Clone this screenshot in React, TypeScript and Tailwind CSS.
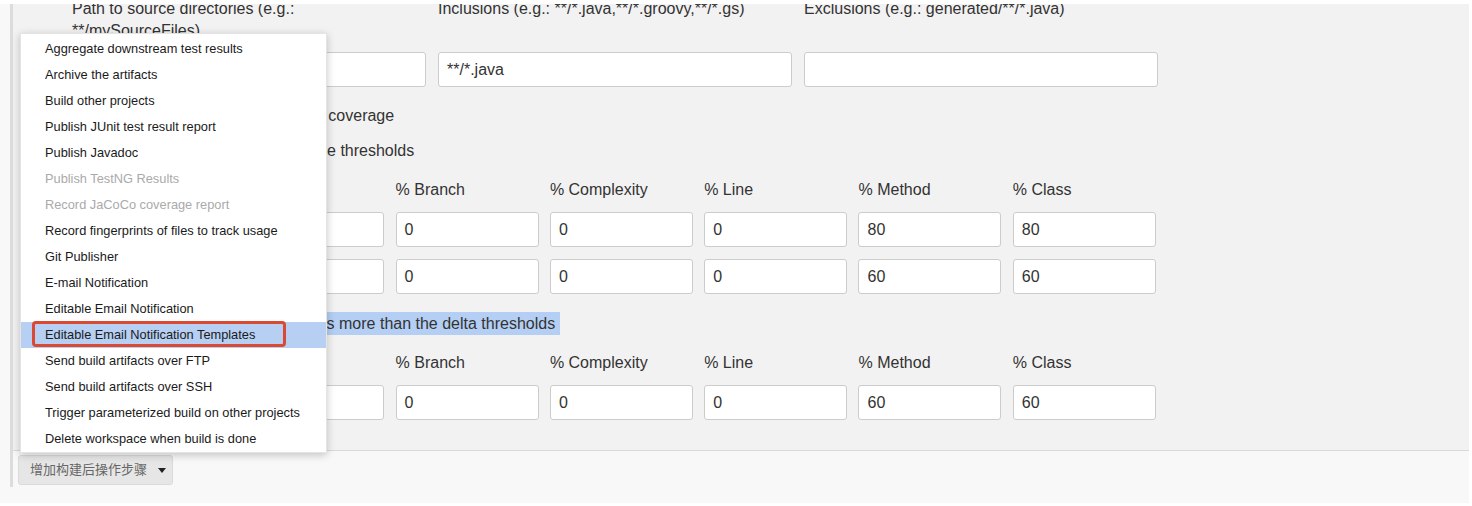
import React from "react";

const items: { label: string; disabled?: boolean; active?: boolean }[] = [
  { label: "Aggregate downstream test results" },
  { label: "Archive the artifacts" },
  { label: "Build other projects" },
  { label: "Publish JUnit test result report" },
  { label: "Publish Javadoc" },
  { label: "Publish TestNG Results", disabled: true },
  { label: "Record JaCoCo coverage report", disabled: true },
  { label: "Record fingerprints of files to track usage" },
  { label: "Git Publisher" },
  { label: "E-mail Notification" },
  { label: "Editable Email Notification" },
  { label: "Editable Email Notification Templates", active: true },
  { label: "Send build artifacts over FTP" },
  { label: "Send build artifacts over SSH" },
  { label: "Trigger parameterized build on other projects" },
  { label: "Delete workspace when build is done" },
];

const cols = ["", "% Branch", "% Complexity", "% Line", "% Method", "% Class"];

function Field({ value = "" }: { value?: string }) {
  return (
    <div className="h-[35px] bg-white border border-[#cccccc] rounded-[3px] pl-[8px] flex items-center text-[16px] text-[#333]">
      {value}
    </div>
  );
}

function Check() {
  return <span className="inline-block w-[13px] h-[13px] bg-white border border-[#999] rounded-[2px] shrink-0" />;
}

function ThresholdBlock({ rows, labelGap }: { rows: string[][]; labelGap: string }) {
  return (
    <div className="grid grid-cols-[158px_repeat(6,143px)] gap-x-[11.3px]">
      <div className="h-[22px]" />
      {cols.map((c, k) => (
        <div key={k} className="h-[22px] leading-[22px] text-[16px] text-[#333]">
          {c}
        </div>
      ))}
      {rows.map((r, i) => (
        <React.Fragment key={i}>
          <div className={i === 0 ? labelGap : "mt-[12px]"} />
          {r.map((v, j) => (
            <div key={j} className={i === 0 ? labelGap : "mt-[12px]"}>
              <Field value={v} />
            </div>
          ))}
        </React.Fragment>
      ))}
    </div>
  );
}

export default function App() {
  return (
    <div className="relative w-[1472px] h-[506px] overflow-hidden bg-white font-['Liberation_Sans','Noto_Sans_CJK_SC',Arial,sans-serif]">
      <div className="mt-[4px] mr-[3px] h-[499px] bg-[#f8f8f8] flex">
        <div className="w-[10px] shrink-0" />
        <div className="flex-1 self-start border-l-[3px] border-[#dcdcdc] flex flex-col">
          {/* panel */}
          <div className="h-[447px] overflow-hidden bg-[#f2f2f2] border-b border-[#d9d9d9]">
            <div className="pl-[59px] mt-[-6px]">
              <div className="grid grid-cols-[354px_354px_354px] gap-x-[12px]">
                <div className="leading-[22px] text-[16px] text-[#333]">
                  Path to source directories (e.g.: **/mySourceFiles)
                </div>
                <div className="leading-[22px] text-[16px] text-[#333]">
                  Inclusions (e.g.: **/*.java,**/*.groovy,**/*.gs)
                </div>
                <div className="leading-[22px] text-[16px] text-[#333]">
                  Exclusions (e.g.: generated/**/*.java)
                </div>
                <div className="mt-[10px]">
                  <Field value="" />
                </div>
                <div className="mt-[10px]">
                  <Field value="**/*.java" />
                </div>
                <div className="mt-[10px]">
                  <Field value="" />
                </div>
              </div>

              <div className="mt-[11px] h-[35px] flex items-center gap-[5px] text-[16px] text-[#333]">
                <Check />
                <span>Disable display of source files for coverage</span>
              </div>
              <div className="h-[35px] flex items-center gap-[9px] text-[16px] text-[#333]">
                <Check />
                <span>Change build status according the thresholds</span>
              </div>

              <div className="mt-[11px]">
                <ThresholdBlock
                  labelGap="mt-[11px]"
                  rows={[
                    ["0", "0", "0", "0", "80", "80"],
                    ["0", "0", "0", "0", "60", "60"],
                  ]}
                />
              </div>

              <div className="mt-[12px] h-[35px] flex items-center gap-[5px] text-[16px] text-[#333]">
                <Check />
                <span className="inline-block leading-[23px] bg-[#b4cff3] pr-[5px]">
                  Fail the build if coverage degrades more than the delta thresholds
                </span>
              </div>

              <div className="mt-[11px]">
                <ThresholdBlock labelGap="mt-[11px]" rows={[["0", "0", "0", "0", "60", "60"]]} />
              </div>
            </div>
          </div>

          {/* button row */}
          <div className="pt-[4px] pb-[2px] pl-[5px]">
            <button className="h-[30px] w-[155px] rounded-[3px] bg-[#e6e6e6] border border-[#dadada] flex items-center pl-[11px] text-[13px] text-[#666] font-['Liberation_Sans','Noto_Sans_CJK_SC',sans-serif]">
              <span>增加构建后操作步骤</span>
              <svg className="ml-[11px]" width="8" height="5" viewBox="0 0 8 5">
                <path d="M0 0 H8 L4 5 Z" fill="#222" />
              </svg>
            </button>
          </div>
        </div>
      </div>

      {/* dropdown menu */}
      <div className="absolute left-[20px] top-[33px] w-[307px] h-[420px] py-[2px] bg-white border border-[#e4e4e4] shadow-[0_2px_8px_rgba(0,0,0,0.22)]">
        {items.map((it) => (
          <div
            key={it.label}
            className={
              "relative h-[26px] leading-[26px] pl-[24px] text-[12.8px] whitespace-nowrap " +
              (it.disabled ? "text-[#aaaaaa] " : "text-[#1a1a1a] ") +
              (it.active ? "bg-[#b6cff2]" : "")
            }
          >
            {it.label}
            {it.active && (
              <span className="absolute left-[11px] top-[-1px] w-[254px] h-[26px] border-[3px] border-[#da4a33] rounded-[4px]" />
            )}
          </div>
        ))}
      </div>
    </div>
  );
}
